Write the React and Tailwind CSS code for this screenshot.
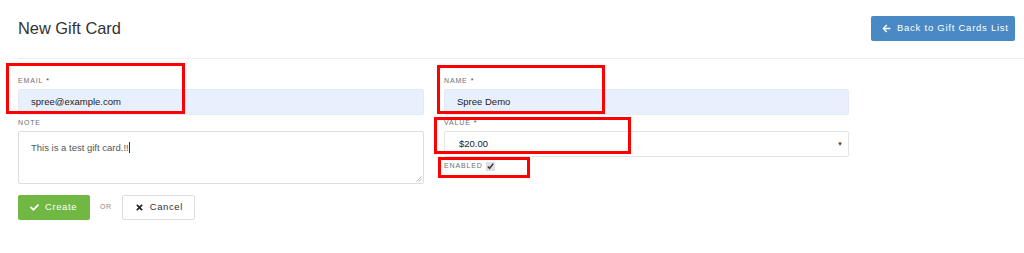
import React from 'react';
import { FaArrowLeft, FaCheck, FaTimes } from 'react-icons/fa';

const font = { fontFamily: '"Liberation Sans", Arial, sans-serif' };

function Label({ children, required }) {
  return (
    <div className="h-[12px] leading-[12px] text-[7px] uppercase tracking-[0.85px] text-[#6f6f6f]">
      {children}
      {required && <span className="ml-[3px] text-[#444]">*</span>}
    </div>
  );
}

// annotation boxes drawn over the screenshot
function Mark({ className }) {
  return <div className={`absolute border-[3px] border-[#ff0000] pointer-events-none ${className}`} />;
}

export default function App() {
  return (
    <div className="relative w-[1024px] h-[253px] bg-white text-[#333]" style={font}>
      <div className="pl-[18px]">
        {/* Header */}
        <div className="flex items-center justify-between h-[59px] pr-[9px] border-b border-[#eee]">
          <h1 className="text-[16.4px] text-[#333] leading-none -mt-[1px]">New Gift Card</h1>
          <button className="flex items-center h-[25px] w-[144px] -mt-[1px] pl-[11px] rounded-[2px] bg-[#4a8ac4] text-white text-[9.5px] tracking-[0.75px]">
            <FaArrowLeft className="w-[9px] h-[9px] mr-[6px]" />
            Back to Gift Cards List
          </button>
        </div>

        {/* Form */}
        <div className="grid grid-cols-[406px_405px] gap-x-[20px] pt-[16px]">
          <div>
            <Label required>Email</Label>
            <div className="mt-[2px] h-[26px] flex items-center px-[12px] bg-[#e8f0fe] border border-[#e4eaf4] rounded-[2px] text-[9.5px] text-[#222]">
              spree@example.com
            </div>
            <div className="mt-[2px]">
              <Label>Note</Label>
            </div>
            <div className="relative mt-[2px] h-[53px] px-[12px] pt-[9px] border border-[#ddd] rounded-[2px] text-[9.5px] text-[#555]">
              This is a test gift card.!!<span className="inline-block w-px h-[11px] bg-[#333] align-middle -mt-[2px]" />
              <svg className="absolute right-[1px] bottom-[1px]" width="6" height="6" viewBox="0 0 6 6">
                <path d="M5.5 0.5 L0.5 5.5 M5.5 3 L3 5.5" stroke="#aaa" strokeWidth="0.8" />
              </svg>
            </div>
          </div>

          <div>
            <Label required>Name</Label>
            <div className="mt-[2px] h-[26px] flex items-center px-[12px] bg-[#e8f0fe] border border-[#e4eaf4] rounded-[2px] text-[9.5px] text-[#222]">
              Spree Demo
            </div>
            <div className="mt-[2px]">
              <Label required>Value</Label>
            </div>
            <div className="mt-[2px] h-[26px] flex items-center justify-between pl-[14px] pr-[5px] border border-[#e5e5e5] rounded-[2px] text-[9.5px] text-[#222]">
              <span>$20.00</span>
              <span className="text-[6px] text-[#444]">▼</span>
            </div>
            <div className="mt-[3px] h-[12px] flex items-center">
              <span className="text-[7px] uppercase tracking-[0.85px] text-[#6f6f6f]">Enabled</span>
              <input type="checkbox" defaultChecked className="ml-[3px] w-[9px] h-[9px] accent-[#e0e0e0]" />
            </div>
          </div>
        </div>

        {/* Actions */}
        <div className="flex items-center mt-[11px]">
          <button className="flex items-center h-[25px] w-[72px] pl-[12px] rounded-[2px] bg-[#70b843] text-white text-[9.5px] tracking-[0.6px]">
            <FaCheck className="w-[9px] h-[9px] mr-[6px]" />
            Create
          </button>
          <span className="ml-[10px] text-[7px] tracking-[0.6px] text-[#8a8a8a]">OR</span>
          <button className="ml-[10px] flex items-center h-[25px] w-[73px] pl-[12px] rounded-[2px] bg-white border border-[#ddd] text-[#333] text-[9.5px] tracking-[0.6px]">
            <FaTimes className="w-[9px] h-[9px] mr-[6px] text-[#222]" />
            Cancel
          </button>
        </div>
      </div>

      <Mark className="left-[6px] top-[63px] w-[179px] h-[51px]" />
      <Mark className="left-[437px] top-[65px] w-[168px] h-[49px]" />
      <Mark className="left-[434px] top-[117px] w-[197px] h-[37px]" />
      <Mark className="left-[438px] top-[157px] w-[92px] h-[21px]" />
    </div>
  );
}
